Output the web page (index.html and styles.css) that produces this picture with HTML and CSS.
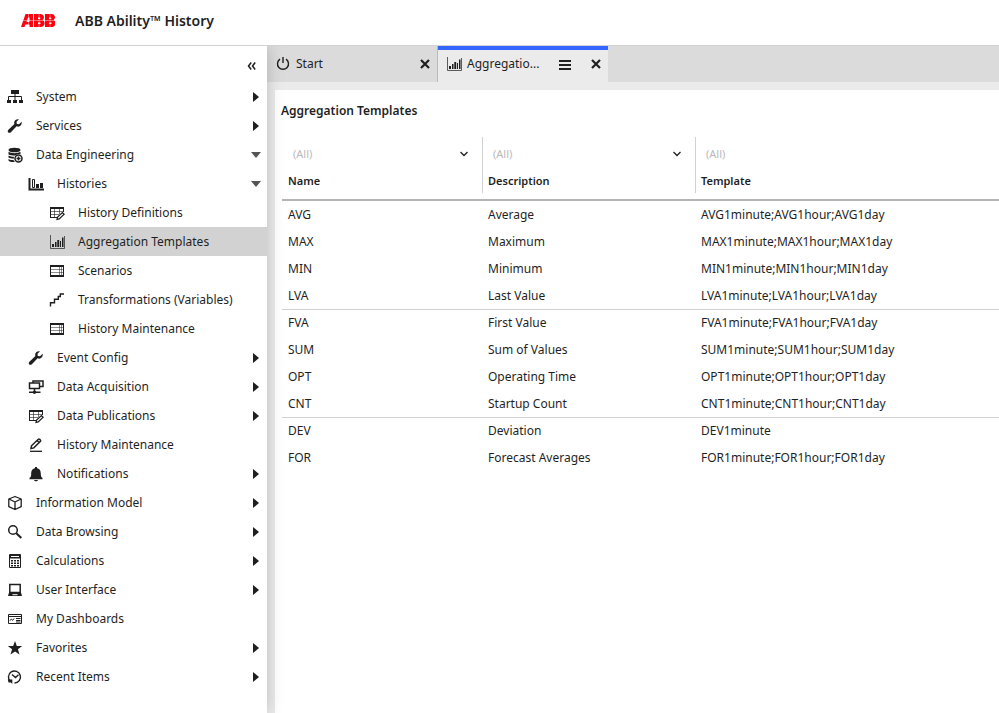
FILE: index.html
```
<!DOCTYPE html>
<html lang="en">
<head>
	<meta charset="utf-8">
	<title>ABB Ability History</title>
	<link rel="stylesheet" href="styles.css">
</head>
<body>
	<!-- icon set -->
	<svg class="sprite" width="0" height="0" aria-hidden="true">
		<symbol id="i-system" viewBox="0 0 16 16"><path d="M4 1h8v4H4zM0 11h4v3H0zM6 11h4v3H6zM12 11h4v3h-4z"/><path d="M8 5v6M1.500 11V7.500h13V11" fill="none" stroke="currentColor"/></symbol>
		<symbol id="i-wrench" viewBox="0 0 16 16"><path d="M14.700 3.800 12 6.300 9.800 5.900 9.500 3.800 12 1.300C10 .7 7.500 1.800 7.200 4.200c-.1.800 0 1.400.2 1.900L1.400 11.800c-1.900 2 .7 4.200 2.500 2.400L9.600 8.300c2.800 1.300 5.600-1 5.100-4.500z"/></symbol>
		<symbol id="i-database" viewBox="0 0 16 16"><ellipse cx="7.500" cy="3" rx="6" ry="2.300"/><path d="M1.500 4.800c2 1.800 10 1.800 12 0v2.400c-2-.4-4.200.2-5.300 1.400-2.800 0-5.500-.3-6.700-1.400zM1.500 8.500c1.200 1 3.500 1.300 5.500 1.300l-.3 2c-2-.1-4.200-.4-5.200-1.200zM1.500 12c1.200.8 3.200 1.200 5.300 1.200l1 1.800c-3 .2-5.500-.3-6.300-1.500z"/><circle cx="11.500" cy="11.500" r="3.500" fill="none" stroke="currentColor" stroke-width="1.500"/><path d="M9.500 11.500h4M11.500 9.500v4" stroke="currentColor" stroke-width="1.500"/></symbol>
		<symbol id="i-histories" viewBox="0 0 16 16"><path d="M1.500 2v11.500H16" fill="none" stroke="currentColor" stroke-width="2"/><path d="M4.500 3.500h2v8h-2z" fill="none" stroke="currentColor"/><path d="M8 8h3v4H8zM12 7h3v5h-3z"/></symbol>
		<symbol id="i-tableedit" viewBox="0 0 16 16"><path d="M14.500 7V3M1.500 3v9.500H8" fill="none" stroke="currentColor"/><path d="M1 6.500h13M1 9.500h9M5.500 4v8M10.500 4v5" fill="none" stroke="currentColor" stroke-opacity=".6"/><path d="M1 2h14v2H1zM1 12h7v1H1z"/><path d="m8 14.500.6-2.500 4.800-4.500 1.800 1.700-5 4.700z" fill="#fff" stroke="currentColor" stroke-width="1.200"/></symbol>
		<symbol id="i-chart" viewBox="0 0 16 16"><path d="M1.500 1v13.500H15.500V2" fill="none" stroke="currentColor" stroke-opacity=".7"/><path d="M3 10h2v3H3zM6 8h1.500v5H6zM8.300 6h1.900v7H8.300zM11 7h1v6h-1zM13 3.500h1.500V13H13z"/></symbol>
		<symbol id="i-table" viewBox="0 0 16 16"><path d="M1.500 3v10M14.500 3v10" stroke="currentColor"/><path d="M2 6.500h12M2 9.500h12M10.500 4v8M12.500 4v8" fill="none" stroke="currentColor" stroke-opacity=".5"/><path d="M1 2h14v2H1zM1 12h14v2H1z"/></symbol>
		<symbol id="i-steps" viewBox="0 0 16 16"><path d="M1.500 14.500v-3.800h4V7.300h3.800V4.500h2V2H15" fill="none" stroke="currentColor" stroke-width="1.400"/></symbol>
		<symbol id="i-network" viewBox="0 0 16 16"><path d="M1.500 4h10v5.500h-10zM5 4V2h10v5.500h-3.500M6.500 9.500v3M1 13.300h11.500" fill="none" stroke="currentColor" stroke-width="1.500"/><circle cx="6.500" cy="13.300" r="1.700"/></symbol>
		<symbol id="i-pen" viewBox="0 0 16 16"><path d="m3 11.500.5-2.700 6.800-6.600c.8-.7 3 1.200 2.200 2.100l-6.700 6.600zM9 3.500l2.300 2.300" fill="none" stroke="currentColor" stroke-width="1.500"/><path d="M2 14.300h12" stroke="currentColor" stroke-width="1.300"/></symbol>
		<symbol id="i-bell" viewBox="0 0 16 16"><path d="M7 1h2v1.200C12 2.700 12.800 5 12.800 8c0 2 .4 3 1.700 4v1.300h-13V12c1.300-1 1.700-2 1.700-4 0-3 .8-5.300 3.800-5.800zM6 14h4c-.3 1.800-3.700 1.800-4 0z"/></symbol>
		<symbol id="i-cube" viewBox="0 0 16 16"><path d="M8 1.500 14.200 4v7.700L8 14.500l-6.200-2.800V4zM2 4l6 3 6-3M8 7v7.500" fill="none" stroke="currentColor" stroke-width="1.300" stroke-linejoin="round"/></symbol>
		<symbol id="i-search" viewBox="0 0 16 16"><circle cx="6" cy="6" r="4.300" fill="none" stroke="currentColor" stroke-width="1.500"/><path d="m9.300 9.300 5 4.700" stroke="currentColor" stroke-width="2"/></symbol>
		<symbol id="i-calc" viewBox="0 0 16 16"><path d="M2.500 1.500h11v13h-11z" fill="none" stroke="currentColor"/><path d="M3 2h10v3.500H3zM4 7h2v1.500H4zM7 7h2v1.500H7zM10 7h2v1.500h-2zM4 9.500h2V11H4zM7 9.500h2V11H7zM10 9.500h2V11h-2zM4 12h2v1.500H4zM7 12h2v1.500H7zM10 12h2v1.500h-2z"/><path d="M4 3.500h8" stroke="#fff"/></symbol>
		<symbol id="i-laptop" viewBox="0 0 16 16"><path d="M2.800 2.500h10.400v8H2.800z" fill="none" stroke="currentColor" stroke-width="1.500"/><path d="M2 10.500h12l1 3.500H1z"/><path d="M5.500 12.700h5" stroke="#fff"/></symbol>
		<symbol id="i-dash" viewBox="0 0 16 16"><path d="M1.500 3.500h13v9h-13zM1 5.500h14M3 9.700 4.300 8l1.400 1.300L7 7.500M9 7.500h4.500M9 9.500h4.500M9 11h4.500" fill="none" stroke="currentColor"/></symbol>
		<symbol id="i-star" viewBox="0 0 16 16"><path d="m8 1 1.800 5h5.400l-4.300 3.300 1.600 5.300L8 11.500l-4.500 3.100 1.600-5.300L.8 6h5.400z"/></symbol>
		<symbol id="i-recent" viewBox="0 0 16 16"><path d="M3.500 12.500A6 6 0 1 1 7.500 14M5 5.500l3.500 3 3-2.800" fill="none" stroke="currentColor" stroke-width="1.400"/><path d="M.8 10.500h4.500V15l-1.500-1.500H1.500z"/></symbol>
		<symbol id="i-power" viewBox="0 0 16 16"><path d="M5 3.200a5.500 5.500 0 1 0 6 0M8 1v6" fill="none" stroke="currentColor" stroke-width="1.400"/></symbol>
		<symbol id="i-close" viewBox="0 0 16 16"><path d="m4 4 8 8M12 4l-8 8" stroke="currentColor" stroke-width="2.200"/></symbol>
		<symbol id="i-menu" viewBox="0 0 16 16"><path d="M2 5h12M2 9h12M2 13h12" stroke="currentColor" stroke-width="2"/></symbol>
		<symbol id="i-right" viewBox="0 0 10 10"><path d="M2 0v10l6-5z"/></symbol>
		<symbol id="i-down" viewBox="0 0 10 10"><path d="M0 2h10L5 8z"/></symbol>
		<symbol id="i-chevron" viewBox="0 0 10 10"><path d="m1.500 3 3.500 3.500L8.500 3" fill="none" stroke="currentColor" stroke-width="1.300"/></symbol>
		<symbol id="i-collapse" viewBox="0 0 10 10"><path d="M4.200 1.500 1.500 5l2.700 3.500M8.200 1.500 5.500 5l2.700 3.500" fill="none" stroke="currentColor" stroke-width="1.500"/></symbol>
	</svg>

	<header class="header">
		<svg class="logo" viewBox="0 0 34 14" role="img" aria-label="ABB">
			<path d="M0 13 4.500 0H12v13H8.500V10.500H4.300L3.500 13zM5.500 8h3V3.500H7zM13 0h6c4.500 0 5 4.500 2.500 6 3.500 1.500 2.500 7-2 7H13zM17 3.500v1.500h1.800c.8 0 .8-1.500 0-1.500zM17 8.500V10h2c.8 0 .8-1.500 0-1.500zM24 0h6c4.500 0 5 4.500 2.500 6 3.500 1.500 2.500 7-2 7H24zM28 3.500v1.500h1.800c.8 0 .8-1.500 0-1.500zM28 8.500V10h2c.8 0 .8-1.500 0-1.500z" fill="#ff000f" fill-rule="evenodd"/>
			<path d="M0 6.500h34M7.500 0v13M18 0v13M29 0v13" stroke="#fff" stroke-width=".4"/>
		</svg>
		<h1 class="product">ABB Ability™ History</h1>
	</header>

	<div class="layout">
		<nav class="sidebar">
			<div class="collapse">
				<button type="button" aria-label="Collapse menu"><svg class="icon-s"><use href="#i-collapse"/></svg></button>
			</div>
			<ul class="tree">
				<li><button type="button" class="item"><svg class="icon"><use href="#i-system"/></svg><span>System</span><svg class="arrow"><use href="#i-right"/></svg></button></li>
				<li><button type="button" class="item"><svg class="icon"><use href="#i-wrench"/></svg><span>Services</span><svg class="arrow"><use href="#i-right"/></svg></button></li>
				<li>
					<button type="button" class="item" aria-expanded="true"><svg class="icon"><use href="#i-database"/></svg><span>Data Engineering</span><svg class="arrow open"><use href="#i-down"/></svg></button>
					<ul class="level2">
						<li>
							<button type="button" class="item" aria-expanded="true"><svg class="icon"><use href="#i-histories"/></svg><span>Histories</span><svg class="arrow open"><use href="#i-down"/></svg></button>
							<ul class="level3">
								<li><a href="#" class="item"><svg class="icon"><use href="#i-tableedit"/></svg><span>History Definitions</span></a></li>
								<li><a href="#" class="item active"><svg class="icon"><use href="#i-chart"/></svg><span>Aggregation Templates</span></a></li>
								<li><a href="#" class="item"><svg class="icon"><use href="#i-table"/></svg><span>Scenarios</span></a></li>
								<li><a href="#" class="item"><svg class="icon"><use href="#i-steps"/></svg><span>Transformations (Variables)</span></a></li>
								<li><a href="#" class="item"><svg class="icon"><use href="#i-table"/></svg><span>History Maintenance</span></a></li>
							</ul>
						</li>
						<li><button type="button" class="item"><svg class="icon"><use href="#i-wrench"/></svg><span>Event Config</span><svg class="arrow"><use href="#i-right"/></svg></button></li>
						<li><button type="button" class="item"><svg class="icon"><use href="#i-network"/></svg><span>Data Acquisition</span><svg class="arrow"><use href="#i-right"/></svg></button></li>
						<li><button type="button" class="item"><svg class="icon"><use href="#i-tableedit"/></svg><span>Data Publications</span><svg class="arrow"><use href="#i-right"/></svg></button></li>
						<li><a href="#" class="item"><svg class="icon"><use href="#i-pen"/></svg><span>History Maintenance</span></a></li>
						<li><button type="button" class="item"><svg class="icon"><use href="#i-bell"/></svg><span>Notifications</span><svg class="arrow"><use href="#i-right"/></svg></button></li>
					</ul>
				</li>
				<li><button type="button" class="item"><svg class="icon"><use href="#i-cube"/></svg><span>Information Model</span><svg class="arrow"><use href="#i-right"/></svg></button></li>
				<li><button type="button" class="item"><svg class="icon"><use href="#i-search"/></svg><span>Data Browsing</span><svg class="arrow"><use href="#i-right"/></svg></button></li>
				<li><button type="button" class="item"><svg class="icon"><use href="#i-calc"/></svg><span>Calculations</span><svg class="arrow"><use href="#i-right"/></svg></button></li>
				<li><button type="button" class="item"><svg class="icon"><use href="#i-laptop"/></svg><span>User Interface</span><svg class="arrow"><use href="#i-right"/></svg></button></li>
				<li><a href="#" class="item"><svg class="icon"><use href="#i-dash"/></svg><span>My Dashboards</span></a></li>
				<li><button type="button" class="item"><svg class="icon"><use href="#i-star"/></svg><span>Favorites</span><svg class="arrow"><use href="#i-right"/></svg></button></li>
				<li><button type="button" class="item"><svg class="icon"><use href="#i-recent"/></svg><span>Recent Items</span><svg class="arrow"><use href="#i-right"/></svg></button></li>
			</ul>
		</nav>

		<div class="main">
			<div class="tabs">
				<div class="tab">
					<button type="button" class="tab-name"><svg class="icon"><use href="#i-power"/></svg><span>Start</span></button>
					<button type="button" aria-label="Close Start"><svg class="icon"><use href="#i-close"/></svg></button>
				</div>
				<div class="tab current">
					<button type="button" class="tab-name"><svg class="icon"><use href="#i-chart"/></svg><span>Aggregatio...</span></button>
					<button type="button" aria-label="Tab menu"><svg class="icon"><use href="#i-menu"/></svg></button>
					<button type="button" aria-label="Close Aggregation Templates"><svg class="icon"><use href="#i-close"/></svg></button>
				</div>
			</div>

			<main class="panel">
				<h2 class="title">Aggregation Templates</h2>
				<table class="grid">
					<thead>
						<tr>
							<th class="col-name">
								<div class="head">
									<div class="filter"><select aria-label="Filter Name"><option>(All)</option></select><svg class="icon-s"><use href="#i-chevron"/></svg></div>
									Name
								</div>
							</th>
							<th class="col-desc">
								<div class="head">
									<div class="filter"><select aria-label="Filter Description"><option>(All)</option></select><svg class="icon-s"><use href="#i-chevron"/></svg></div>
									Description
								</div>
							</th>
							<th>
								<div class="head">
									<div class="filter"><select aria-label="Filter Template"><option>(All)</option></select></div>
									Template
								</div>
							</th>
						</tr>
					</thead>
					<tbody>
						<tr><td>AVG</td><td>Average</td><td>AVG1minute;AVG1hour;AVG1day</td></tr>
						<tr><td>MAX</td><td>Maximum</td><td>MAX1minute;MAX1hour;MAX1day</td></tr>
						<tr><td>MIN</td><td>Minimum</td><td>MIN1minute;MIN1hour;MIN1day</td></tr>
						<tr><td>LVA</td><td>Last Value</td><td>LVA1minute;LVA1hour;LVA1day</td></tr>
					</tbody>
					<tbody>
						<tr><td>FVA</td><td>First Value</td><td>FVA1minute;FVA1hour;FVA1day</td></tr>
						<tr><td>SUM</td><td>Sum of Values</td><td>SUM1minute;SUM1hour;SUM1day</td></tr>
						<tr><td>OPT</td><td>Operating Time</td><td>OPT1minute;OPT1hour;OPT1day</td></tr>
						<tr><td>CNT</td><td>Startup Count</td><td>CNT1minute;CNT1hour;CNT1day</td></tr>
					</tbody>
					<tbody>
						<tr><td>DEV</td><td>Deviation</td><td>DEV1minute</td></tr>
						<tr><td>FOR</td><td>Forecast Averages</td><td>FOR1minute;FOR1hour;FOR1day</td></tr>
					</tbody>
				</table>
			</main>
		</div>
	</div>
</body>
</html>
```
FILE: styles.css
```
* {
	box-sizing: border-box;
}
body {
	margin: 0;
	min-height: 100vh;
	display: flex;
	flex-direction: column;
	font-family: "Noto Sans", "Open Sans", sans-serif;
	font-size: 12px;
	line-height: 16px;
	color: #1f1f1f;
	background: #fff;
}
button, select {
	font: inherit;
	color: inherit;
	background: none;
	border: 0;
	padding: 0;
	cursor: pointer;
}
svg {
	fill: currentColor;
	flex: none;
}
.sprite {
	position: absolute;
}
.icon {
	width: 16px;
	height: 16px;
	display: block;
}
.icon-s, .arrow {
	width: 10px;
	height: 10px;
	display: block;
}

/* header */
.header {
	display: flex;
	align-items: center;
	gap: 20px;
	height: 46px;
	padding: 0 21px 4px;
	border-bottom: 1px solid #d2d2d2;
	background: #fff;
	position: relative;
	z-index: 2;
}
.logo {
	width: 34px;
	height: 14px;
}
.product {
	margin: 0;
	font-size: 14px;
	font-weight: 600;
}

.layout {
	display: flex;
	flex: 1;
}

/* sidebar */
.sidebar {
	width: 267px;
	flex: none;
	background: #fff;
	box-shadow: 0 0 16px rgba(0, 0, 0, 0.2);
	position: relative;
	z-index: 1;
}
.collapse {
	display: flex;
	justify-content: flex-end;
	align-items: center;
	height: 36px;
	padding: 3px 10px 0 0;
}
.tree, .tree ul {
	list-style: none;
	margin: 0;
	padding: 0;
}
.item {
	display: flex;
	align-items: center;
	gap: 13px;
	width: 100%;
	height: 29px;
	padding: 0 6px 0 7px;
	text-align: left;
	text-decoration: none;
	color: inherit;
}
.item span {
	flex: 1;
	white-space: nowrap;
}
.level2 .item {
	padding-left: 28px;
}
.level3 .item {
	padding-left: 49px;
}
.item.active {
	background: #d2d2d2;
}
.arrow.open {
	color: #555;
}

/* tabs */
.main {
	flex: 1;
	min-width: 0;
	display: flex;
	flex-direction: column;
	background: #ebebeb;
}
.tabs {
	display: flex;
	height: 36px;
	background: #dbdbdb;
}
.tab {
	display: flex;
	align-items: center;
	gap: 15px;
	width: 171px;
	padding: 0 4px 0 8px;
	border-right: 1px solid #bababa;
}
.tab-name {
	display: flex;
	align-items: center;
	flex: 1;
	gap: 5px;
	text-align: left;
}
.tab.current {
	width: 170px;
	padding-bottom: 4px;
	border-right: 0;
	border-top: 4px solid #3366ff;
	background: #ebebeb;
}

/* content */
.panel {
	flex: 1;
	margin: 8px 0 0 8px;
	padding: 13px 0 0 6px;
	background: #fff;
}
.title {
	margin: 0;
	font-size: 12px;
	font-weight: 600;
}
.grid {
	width: 100%;
	margin-top: 18px;
	padding-left: 1px;
	border-spacing: 0;
	table-layout: fixed;
}
.col-name {
	width: 201px;
}
.col-desc {
	width: 213px;
}
.grid th {
	padding: 0 0 6px;
	border-bottom: 2px solid #b5b5b5;
	font-size: 11px;
	font-weight: 600;
	text-align: left;
}
.head {
	height: 56px;
	padding: 7px 6px 0;
	border-right: 1px solid #d2d2d2;
}
.grid th:last-child .head {
	border-right: 0;
}
.filter {
	display: flex;
	align-items: center;
	height: 20px;
	margin-bottom: 9px;
	padding: 0 7px 0 5px;
	font-weight: 400;
}
.filter select {
	flex: 1;
	appearance: none;
	color: #bababa;
}
.grid td {
	height: 27px;
	padding: 0 6px;
	white-space: nowrap;
}
.grid th + th .head, .grid td + td {
	padding-left: 5px;
}
.grid tbody + tbody tr:first-child td {
	border-top: 1px solid #d2d2d2;
}
```
